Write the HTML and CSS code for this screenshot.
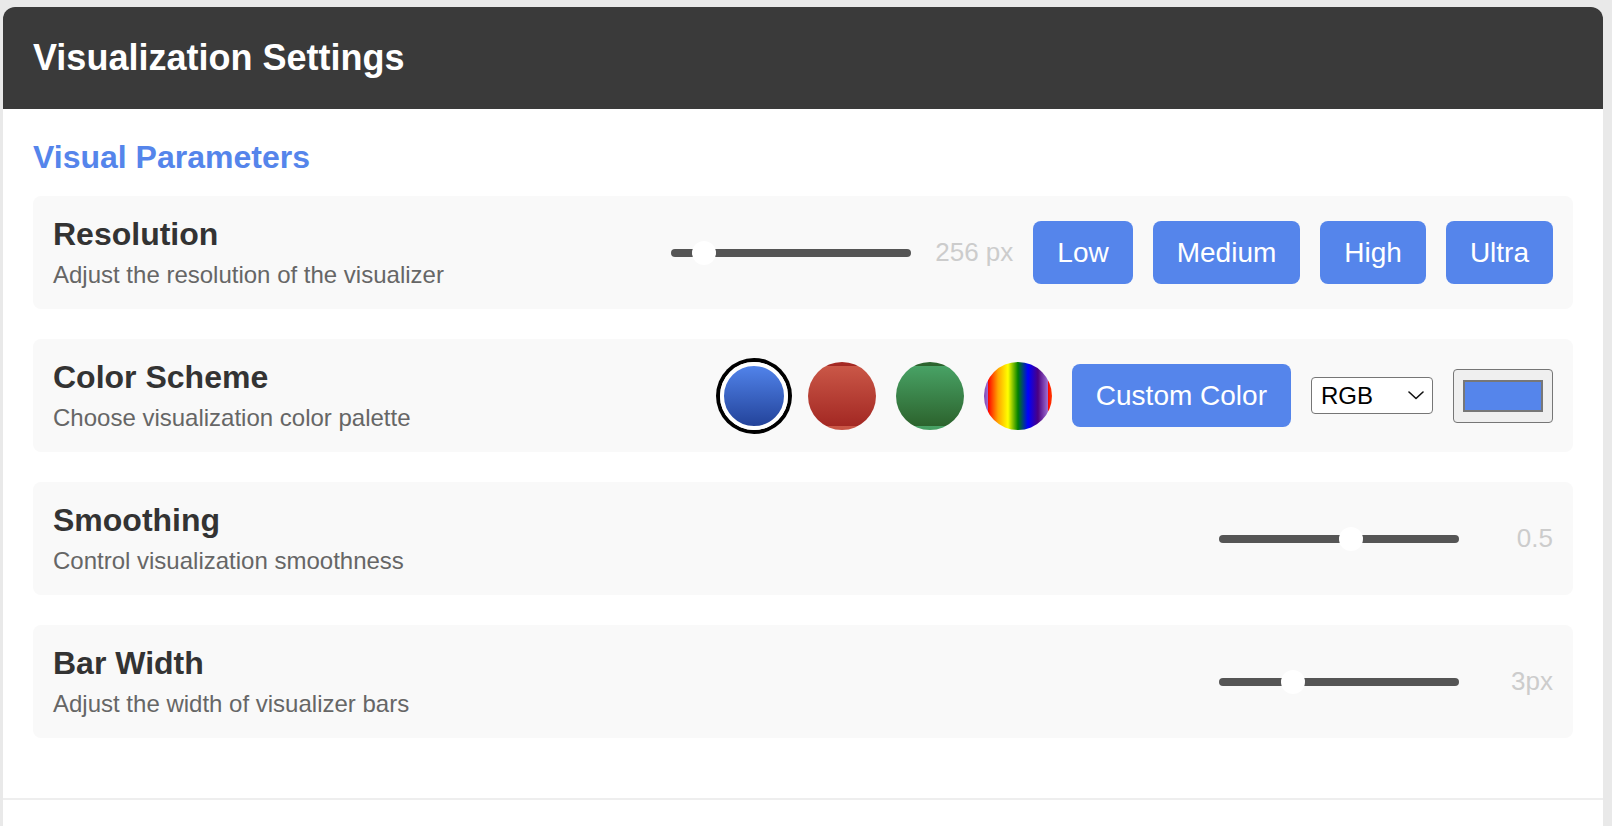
FILE: index.html
```html
<!DOCTYPE html>
<html lang="en">
<head>
<meta charset="utf-8">
<title>Visualization Settings</title>
<link rel="stylesheet" href="styles.css">
</head>
<body>
<div class="panel">
  <header class="panel-header">
    <h1 class="panel-title">Visualization Settings</h1>
  </header>
  <main class="panel-body">
    <section class="settings-section">
      <h2 class="section-title">Visual Parameters</h2>

      <div class="setting">
        <div class="setting-info">
          <h3 class="setting-label">Resolution</h3>
          <p class="setting-desc">Adjust the resolution of the visualizer</p>
        </div>
        <div class="setting-controls">
          <input class="slider" type="range" min="64" max="2048" value="256">
          <span class="value">256 px</span>
          <button class="btn">Low</button>
          <button class="btn">Medium</button>
          <button class="btn">High</button>
          <button class="btn">Ultra</button>
        </div>
      </div>

      <div class="setting">
        <div class="setting-info">
          <h3 class="setting-label">Color Scheme</h3>
          <p class="setting-desc">Choose visualization color palette</p>
        </div>
        <div class="setting-controls">
          <button class="swatch swatch-blue selected" aria-label="Blue"></button>
          <button class="swatch swatch-red" aria-label="Red"></button>
          <button class="swatch swatch-green" aria-label="Green"></button>
          <button class="swatch swatch-rainbow" aria-label="Rainbow"></button>
          <button class="btn">Custom Color</button>
          <div class="select-wrap">
            <select class="select">
              <option>RGB</option>
              <option>HSL</option>
              <option>HEX</option>
            </select>
            <svg class="select-chevron" width="16" height="9" viewBox="0 0 16 9" aria-hidden="true">
              <path d="M1 1 L8 7.5 L15 1" fill="none" stroke="#111" stroke-width="1.6" stroke-linecap="round" stroke-linejoin="round"/>
            </svg>
          </div>
          <input class="color-input" type="color" value="#5585eb">
        </div>
      </div>

      <div class="setting">
        <div class="setting-info">
          <h3 class="setting-label">Smoothing</h3>
          <p class="setting-desc">Control visualization smoothness</p>
        </div>
        <div class="setting-controls">
          <input class="slider" type="range" min="0" max="0.9" step="0.1" value="0.5">
          <span class="value">0.5</span>
        </div>
      </div>

      <div class="setting">
        <div class="setting-info">
          <h3 class="setting-label">Bar Width</h3>
          <p class="setting-desc">Adjust the width of visualizer bars</p>
        </div>
        <div class="setting-controls">
          <input class="slider" type="range" min="1" max="8" value="3">
          <span class="value">3px</span>
        </div>
      </div>
    </section>
  </main>
  <footer class="panel-footer"></footer>
</div>
</body>
</html>
```

FILE: styles.css
```css
* {
  box-sizing: border-box;
}

html, body {
  margin: 0;
  padding: 0;
}

body {
  background: #e9e9e9;
  font-family: "Liberation Sans", Arial, Helvetica, sans-serif;
  color: #333;
}

.panel {
  margin: 7px 9px 0 3px;
  background: #fff;
  border-radius: 12px 12px 0 0;
  overflow: hidden;
}

.panel-header {
  background: #3a3a3a;
  padding: 30px 30px;
}

.panel-title {
  margin: 0;
  font-size: 36px;
  font-weight: bold;
  color: #fff;
  line-height: 42px;
}

.panel-body {
  padding: 30px 30px 30px;
}

.section-title {
  margin: 0 0 20px;
  font-size: 32px;
  line-height: 37px;
  font-weight: bold;
  color: #5585eb;
}

.setting {
  display: flex;
  align-items: center;
  justify-content: space-between;
  background: #f9f9f9;
  border-radius: 8px;
  padding: 20px;
  margin-bottom: 30px;
}

.setting-info {
  flex: 1;
  min-width: 0;
}

.setting-label {
  margin: 0 0 8px;
  font-size: 32px;
  line-height: 37px;
  font-weight: bold;
  color: #333;
}

.setting-desc {
  margin: 0;
  font-size: 24px;
  line-height: 28px;
  color: #666;
}

.setting-controls {
  display: flex;
  align-items: center;
  gap: 20px;
}

.slider {
  -webkit-appearance: none;
  appearance: none;
  width: 240px;
  height: 8px;
  margin: 0;
  background: #555;
  border-radius: 4px;
  outline: none;
}

.slider::-webkit-slider-thumb {
  -webkit-appearance: none;
  appearance: none;
  width: 24px;
  height: 24px;
  border: none;
  border-radius: 50%;
  background: #fff;
}

.value {
  min-width: 70px;
  margin-left: 4px;
  text-align: right;
  font-size: 26px;
  color: #ccc;
}

.btn {
  font-family: inherit;
  font-size: 28px;
  line-height: 33px;
  padding: 15px 24px;
  border: none;
  border-radius: 8px;
  background: #5585eb;
  color: #fff;
  cursor: pointer;
}

.swatch {
  width: 68px;
  height: 68px;
  padding: 0;
  border: 4px solid transparent;
  border-radius: 50%;
  cursor: pointer;
}

.swatch-blue {
  background: linear-gradient(to bottom, #5183ea, #23439a);
}

.swatch-red {
  background: linear-gradient(to bottom, #ca5747, #a32823);
}

.swatch-green {
  background: linear-gradient(to bottom, #48a265, #2c632d);
}

.swatch-rainbow {
  background: linear-gradient(to right, red, orange, yellow, green, blue, indigo, #a070d0);
}

.swatch.selected {
  border-color: #fff;
  box-shadow: 0 0 0 4px #000;
}

.select-wrap {
  position: relative;
}

.select {
  -webkit-appearance: none;
  appearance: none;
  width: 122px;
  height: 37px;
  padding: 0 30px 0 9px;
  font-family: inherit;
  font-size: 24px;
  color: #000;
  background: #fff;
  border: 1px solid #767676;
  border-radius: 4px;
  display: block;
}

.select-chevron {
  position: absolute;
  right: 9px;
  top: 14px;
  pointer-events: none;
}

.color-input {
  -webkit-appearance: none;
  appearance: none;
  width: 100px;
  height: 54px;
  margin: 0;
  padding: 0;
  background: #efefef;
  border: 1px solid #767676;
  border-radius: 4px;
  cursor: pointer;
}

.color-input::-webkit-color-swatch-wrapper {
  padding: 10px 9px;
}

.color-input::-webkit-color-swatch {
  border: 2px solid #777;
  border-radius: 0;
}

.panel-footer {
  border-top: 2px solid #eee;
  height: 60px;
}
```
